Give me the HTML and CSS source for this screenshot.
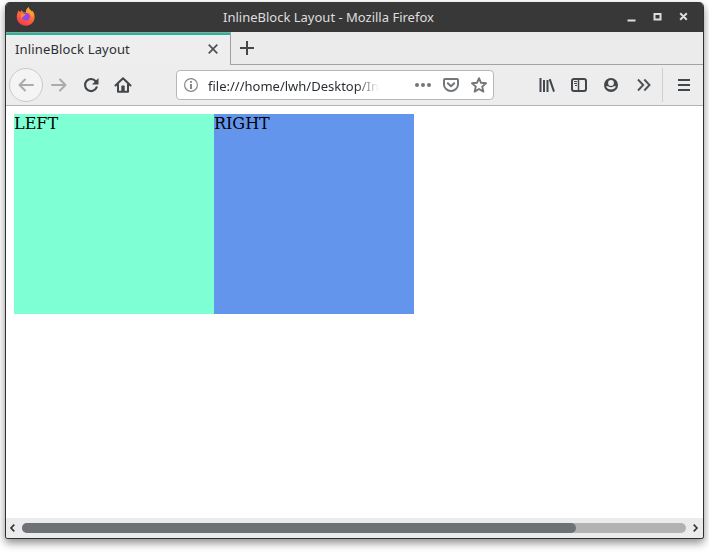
FILE: index.html
```html
<!DOCTYPE html>
<html lang="en">
<head>
<meta charset="utf-8">
<title>InlineBlock Layout</title>
<link rel="stylesheet" href="styles.css">
</head>
<body>
<div class="window">
  <header class="titlebar">
    <svg class="logo" width="20" height="20" viewBox="0 0 20 20">
      <defs>
        <linearGradient id="flame" x1="0.8" y1="0" x2="0.25" y2="1">
          <stop offset="0" stop-color="#ffb824"/><stop offset="0.4" stop-color="#ff7139"/><stop offset="1" stop-color="#f5364c"/>
        </linearGradient>
      </defs>
      <path d="M2.6 3.6 4.5 5.6 5 3 7.4 5.3 10 5.4C10 3 11 1 12.6.2c.3 2 2 2.900 3.300 4.200l.5-.6C18 5.600 18.800 8 18.600 10.600 18.200 15.600 14.500 18.800 9.800 18.800 4.800 18.800 1 15.200.8 10.300.8 7.700 1.400 5.300 2.600 3.600Z" fill="url(#flame)"/>
      <circle cx="10" cy="9.600" r="3.900" fill="#9248e8"/>
      <path d="M4.500 6.300 9.500 7.300C9 8.800 7.500 8.800 7.200 9.800L5 11Z" fill="#ff8a32"/>
      <path d="M10 5.400C10 3 11 1 12.600.2c.3 2 2 2.900 3.300 4.200 1.200 1.800 1.300 4.200.6 6.200C15.500 7.500 13 5.500 10 5.400Z" fill="#ff9d26"/>
    </svg>
    <span class="title">InlineBlock Layout - Mozilla Firefox</span>
    <svg class="controls" width="62" height="12" viewBox="0 0 62 12" fill="none" stroke="#dedede" stroke-width="2">
      <path d="M.5 9.500h8M27.500 3h6v5.500h-6zM53.200 2.200l6.600 6.600M59.800 2.200l-6.600 6.600"/>
    </svg>
  </header>

  <div class="tabs">
    <div class="tab">
      <span class="label">InlineBlock Layout</span>
      <svg width="12" height="12" viewBox="0 0 12 12" fill="none" stroke="#4c5257" stroke-width="1.700"><path d="M1.700 1.700l8.600 8.600M10.300 1.700l-8.600 8.600"/></svg>
    </div>
    <div class="newtab">
      <svg width="14" height="14" viewBox="0 0 14 14" fill="none" stroke="#42474b" stroke-width="2"><path d="M7 0v14M0 7h14"/></svg>
    </div>
  </div>

  <nav class="toolbar">
    <div class="back">
      <svg width="16" height="16" viewBox="0 0 16 16" fill="none" stroke="#a9abac" stroke-width="2" stroke-linecap="round" stroke-linejoin="round"><path d="M15 8H1.500M7 2.500 1.500 8 7 13.500"/></svg>
    </div>
    <svg class="forward" width="16" height="16" viewBox="0 0 16 16" fill="none" stroke="#a9abac" stroke-width="2" stroke-linecap="round" stroke-linejoin="round"><path d="M1 8h13.500M9 2.500 14.500 8 9 13.500"/></svg>
    <svg class="reload" width="16" height="16" viewBox="0 0 16 16"><path d="M12.700 4.200A6 6 0 1 0 13.600 10.300" fill="none" stroke="#42474b" stroke-width="2.200" stroke-linecap="round"/><path d="M15.500 1v6.500H9Z" fill="#42474b"/></svg>
    <svg class="home" width="18" height="16" viewBox="0 0 18 16"><path d="M1.500 8.500 9 1.200l7.500 7.300M4 7v7.700h10V7" fill="none" stroke="#42474b" stroke-width="2" stroke-linecap="round" stroke-linejoin="round"/><path d="M7.300 15V9.500a1 1 0 0 1 1-1h1.400a1 1 0 0 1 1 1V15Z" fill="#42474b"/></svg>
    <div class="address">
      <svg width="14" height="14" viewBox="0 0 14 14"><circle cx="7" cy="7" r="6.400" fill="none" stroke="#85888a" stroke-width="1.200"/><path d="M7 3v1.800M7 6v5" stroke="#777b7d" stroke-width="1.800"/></svg>
      <span class="url">file:///home/lwh/Desktop/In</span>
      <svg class="dots" width="16" height="16" viewBox="0 0 16 16" fill="#73777a"><circle cx="2" cy="8" r="2"/><circle cx="8" cy="8" r="2"/><circle cx="14" cy="8" r="2"/></svg>
      <svg width="16" height="16" viewBox="0 0 16 16" fill="none" stroke="#73777a" stroke-width="2" stroke-linecap="round" stroke-linejoin="round"><path d="M2 2h12a1 1 0 0 1 1 1v4.500a7 6.500 0 0 1-14 0V3a1 1 0 0 1 1-1ZM4.800 6.200 8 9.200l3.200-3"/></svg>
      <svg width="16" height="16" viewBox="0 0 16 16" fill="none" stroke="#73777a" stroke-width="1.900" stroke-linejoin="round"><path d="M8 1.200l2 4.600 5 .5-3.800 3.300 1.200 5L8 12l-4.400 2.600 1.200-5L1 6.300l5-.5Z"/></svg>
    </div>
    <svg class="library" width="16" height="16" viewBox="0 0 16 16" fill="none" stroke="#42474b" stroke-width="2"><path d="M1.500 1v14M5 3v12M8.500 3v12M10.700 2.200l4.300 12.500"/></svg>
    <svg class="sidebar" width="16" height="16" viewBox="0 0 16 16" fill="none" stroke="#42474b"><rect x="1" y="2" width="14" height="12" rx="2" stroke-width="2"/><path d="M7.500 2v12" stroke-width="1.500"/><path d="M3 4.500h3M3 6.500h3M4 8.500h2"/></svg>
    <svg class="account" width="16" height="16" viewBox="0 0 16 16"><circle cx="8" cy="8" r="7" fill="#42474b"/><circle cx="8" cy="6" r="2.900" fill="#ededed"/><path d="M3 9.300h2.200Q8 11.300 10.800 9.300H13Q11.600 12.600 8 12.600T3 9.300Z" fill="#ededed"/></svg>
    <svg class="more" width="14" height="14" viewBox="0 0 14 14" fill="none" stroke="#4c5155" stroke-width="1.900"><path d="M1 1.500 6.200 7 1 12.500M7.300 1.500 12.500 7l-5.200 5.500"/></svg>
    <div class="menu"><svg width="12" height="12" viewBox="0 0 12 12" stroke="#42474b" stroke-width="2"><path d="M0 1h12M0 6h12M0 11h12"/></svg></div>
  </nav>

  <main class="page">
    <div class="box left">LEFT</div>
    <div class="box right">RIGHT</div>
  </main>

  <div class="scrollbar">
    <svg width="6" height="8" viewBox="0 0 6 8" fill="none" stroke="#34383b" stroke-width="1.700"><path d="M5.300.7 2 4l3.300 3.300"/></svg>
    <div class="track"><div class="thumb"></div></div>
    <svg width="6" height="8" viewBox="0 0 6 8" fill="none" stroke="#34383b" stroke-width="1.700"><path d="M.7.7 4 4 .7 7.300"/></svg>
  </div>
</div>
</body>
</html>
```
FILE: styles.css
```css
* { box-sizing: border-box; }

body {
  margin: 0;
  height: 553px;
  padding: 2px 5px;
  overflow: hidden;
  background: #fff;
  font: 13px "Noto Sans", sans-serif;
  color: #2b2f33;
}

svg { display: block; flex: none; }

.window {
  width: 699px;
  height: 537px;
  display: flex;
  flex-direction: column;
  border: 1px solid #303030;
  border-top: 0;
  border-radius: 5px 5px 3px 3px;
  overflow: hidden;
  background: #ededed;
  box-shadow: 0 4px 9px rgba(0, 0, 0, 0.45);
}

.titlebar {
  height: 30px;
  flex: none;
  display: flex;
  align-items: center;
  background: #383838;
  color: #dedede;
}

.logo { margin: 0 0 5px 10px; align-self: flex-end; }
.title { width: 212px; margin-left: 187px; white-space: nowrap; }
.controls { margin-left: 192px; }

.tabs {
  height: 33px;
  flex: none;
  display: flex;
  background: #ebebeb;
}

.tab {
  width: 225px;
  display: flex;
  align-items: center;
  justify-content: space-between;
  padding: 0 11px 1px 9px;
  border-right: 1px solid #a0a0a0;
  background: linear-gradient(#a0a0a0 1px, #1abc9c 1px, #1abc9c 3px, #eee 3px);
}

.label { letter-spacing: 0.16px; }

.newtab {
  flex: 1;
  padding: 9px 0 0 9px;
  border-bottom: 1px solid #a3a3a3;
}

.tab > * { margin-top: 2px; }

.toolbar {
  height: 41px;
  flex: none;
  display: flex;
  align-items: center;
  border-bottom: 1px solid #b4b4b4;
  background: #ededed;
}

.back {
  width: 34px;
  height: 34px;
  margin-left: 3px;
  flex: none;
  display: grid;
  place-items: center;
  border: 1px solid #cacaca;
  border-radius: 50%;
  background: #f4f4f4;
}

.forward { margin-left: 8px; }
.reload { margin-left: 16px; }
.home { margin-left: 15px; }

.address {
  width: 318px;
  height: 30px;
  margin-left: 44px;
  flex: none;
  display: flex;
  align-items: center;
  padding: 0 6px 0 7px;
  border: 1px solid #b7b7b7;
  border-radius: 4px;
  background: #fff;
  gap: 12px;
}

.url {
  width: 171px;
  margin-left: -2px;
  padding-top: 2px;
  flex: none;
  white-space: nowrap;
  -webkit-mask-image: linear-gradient(to right, #000 148px, transparent 171px);
  mask-image: linear-gradient(to right, #000 148px, transparent 171px);
}

.dots { margin-left: 24px; }

.library { margin-left: 45px; }
.sidebar { margin-left: 16px; }
.account { margin-left: 16px; }
.more { margin-left: 18px; }

.menu {
  height: 34px;
  display: flex;
  align-items: center;
  margin-left: 11px;
  padding-left: 15px;
  border-left: 1px solid #cfcfcf;
}

.page {
  flex: 1;
  display: flex;
  align-items: flex-start;
  padding: 8px;
  background: #fff;
  color: #000;
  font: 16px "DejaVu Serif", serif;
}

.box { width: 200px; height: 200px; }
.left { background: aquamarine; }
.right { background: cornflowerblue; }

.scrollbar {
  height: 20px;
  flex: none;
  display: flex;
  align-items: center;
  padding: 0 4px 0 3px;
  background: #ebebeb;
}

.track {
  flex: 1;
  height: 10px;
  margin: 0 7px;
  border-radius: 5px;
  background: #b1b2b3;
}

.thumb {
  width: 554px;
  height: 10px;
  border-radius: 5px;
  background: #6e7276;
}
```
